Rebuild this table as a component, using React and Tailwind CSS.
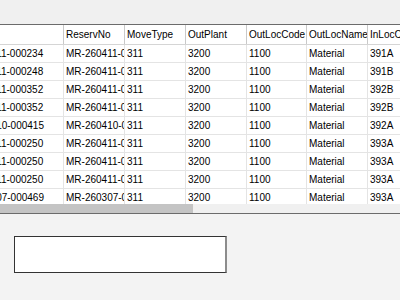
const columns = [
  { key: "doc", title: "", width: "w-[111px]" },
  { key: "res", title: "ReservNo", width: "w-[61px]" },
  { key: "move", title: "MoveType", width: "w-[61px]" },
  { key: "plant", title: "OutPlant", width: "w-[61px]" },
  { key: "code", title: "OutLocCode", width: "w-[60px]" },
  { key: "name", title: "OutLocName", width: "w-[61px]" },
  { key: "inloc", title: "InLocCode", width: "w-[61px]" },
];

const rows = [
  ["MR-260411-000234", "MR-260411-000101", "311", "3200", "1100", "Material", "391A"],
  ["MR-260411-000248", "MR-260411-000102", "311", "3200", "1100", "Material", "391B"],
  ["MR-260411-000352", "MR-260411-000103", "311", "3200", "1100", "Material", "392B"],
  ["MR-260411-000352", "MR-260411-000104", "311", "3200", "1100", "Material", "392B"],
  ["MR-260410-000415", "MR-260410-000105", "311", "3200", "1100", "Material", "392A"],
  ["MR-260411-000250", "MR-260411-000106", "311", "3200", "1100", "Material", "393A"],
  ["MR-260411-000250", "MR-260411-000107", "311", "3200", "1100", "Material", "393A"],
  ["MR-260411-000250", "MR-260411-000108", "311", "3200", "1100", "Material", "393A"],
  ["MR-260307-000469", "MR-260307-000109", "311", "3200", "1100", "Material", "393A"],
];

export default function App() {
  return (
    <div className="w-[400px] h-[300px] overflow-hidden bg-[#f3f3f3] text-[10px] leading-none text-black font-['Liberation_Sans',Arial,sans-serif]">
      <div className="h-[24px] bg-[#f0f0f0]" />
      <div className="h-px bg-[#6b6b6b]" />

      {/* grid body, scrolled horizontally */}
      <div className="h-[179px] overflow-hidden bg-white">
        <div className="ml-[-47px] w-[480px]">
          <div className="flex h-[20px] border-b border-[#d5d5d5] bg-white">
            {columns.map((c) => (
              <div
                key={c.key}
                className={`${c.width} shrink-0 flex items-center pl-[2px] border-r border-[#c9c9c9] overflow-hidden whitespace-nowrap`}
              >
                {c.title}
              </div>
            ))}
          </div>
          {rows.map((r, i) => (
            <div key={i} className="flex h-[18px] border-b border-[#e4e4e4]">
              {r.map((v, j) => (
                <div
                  key={j}
                  className={`${columns[j].width} shrink-0 flex items-center pl-[2px] border-r border-[#e4e4e4] overflow-hidden whitespace-nowrap`}
                >
                  {v}
                </div>
              ))}
            </div>
          ))}
        </div>
      </div>

      {/* horizontal scrollbar */}
      <div className="flex h-[9px] bg-[#f0f0f0]">
        <div className="w-[193px] bg-[#c4c4c4]" />
      </div>
      <div className="h-px bg-[#6b6b6b]" />

      <div className="pt-[22px] pl-[14px]">
        <div className="w-[213px] h-[37px] bg-white border-t border-l border-b border-[#333333] border-r-2 border-r-[#8c8c8c]" />
      </div>
    </div>
  );
}
